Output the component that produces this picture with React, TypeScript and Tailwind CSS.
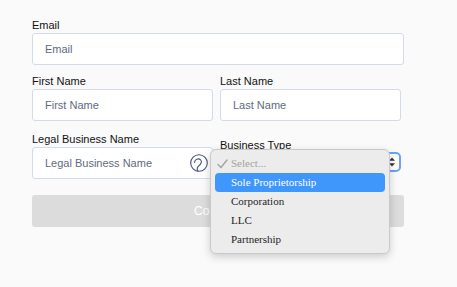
import React from "react";

const font = { fontFamily: '"Liberation Sans", Arial, sans-serif' };

function Field({ label, placeholder, icon }: { label: string; placeholder: string; icon?: boolean }) {
    return (
        <div className="flex flex-col w-[181px]">
            <label className="text-[11px] leading-4 text-[#111]">{label}</label>
            <div className="relative h-[32px] w-full rounded-[3px] border border-[#d3dbe8] bg-white flex items-center pl-[12px]">
                <span className="text-[11px] text-[#5e6a84]">{placeholder}</span>
                {icon && (
                    <svg className="absolute left-[156px] top-[5px]" width="20" height="20" viewBox="0 0 20 20" fill="none">
                        <circle cx="10" cy="10" r="8.3" stroke="#46527a" strokeWidth="1.1" />
                        <path d="M5.6 9.4 C5.4 6.2 9.6 5 11.6 6.8 C13.4 8.6 12 11 9.8 12.8 C8.2 14.2 7.8 16.2 8.8 18.2" stroke="#46527a" strokeWidth="1.1" strokeLinecap="round" />
                    </svg>
                )}
            </div>
        </div>
    );
}

export default function App() {
    return (
        <div className="w-[457px] h-[287px] bg-[#fafafa] overflow-hidden" style={font}>
            <div className="pl-[32px] pt-[17px] flex flex-col">
                <label className="text-[11px] leading-4 text-[#111]">Email</label>
                <div className="h-[32px] w-[372px] rounded-[3px] border border-[#d3dbe8] bg-white flex items-center pl-[12px]">
                    <span className="text-[11px] text-[#5e6a84]">Email</span>
                </div>

                <div className="mt-2 flex gap-[7px]">
                    <Field label="First Name" placeholder="First Name" />
                    <Field label="Last Name" placeholder="Last Name" />
                </div>

                <div className="mt-[10px] flex gap-[7px]">
                    <Field label="Legal Business Name" placeholder="Legal Business Name" icon />
                    <div className="flex flex-col w-[181px]">
                        <label className="mt-[7px] text-[11px] leading-[14px] text-[#111]">Business Type</label>
                        <div className="relative">
                            <div className="h-[20px] w-[181px] rounded-[5px] border-2 border-[#6aa2f4] bg-white flex items-center justify-end pr-[3px]">
                                <svg width="8" height="12" viewBox="0 0 8 12">
                                    <path d="M4 1.5 L7 4.8 H1 Z" fill="#333" />
                                    <path d="M4 10.5 L7 7.2 H1 Z" fill="#333" />
                                </svg>
                            </div>

                            {/* open popup menu */}
                            <div
                                className="absolute left-[-10px] top-[-3px] w-[180px] rounded-[6px] border border-[#c9c9c9] bg-[#ececec] shadow-[0_3px_8px_rgba(0,0,0,0.18)] py-[4px] text-[11px] text-[#1e1e1e]"
                                style={{ fontFamily: '"Liberation Serif", "Times New Roman", serif' }}
                            >
                                <div className="h-[19px] flex items-center relative pl-[20px] text-[#a3a3a3]">
                                    <svg className="absolute left-[6px] top-[5px]" width="11" height="10" viewBox="0 0 11 10" fill="none">
                                        <path d="M1 5.5 L4 8.5 L10 1" stroke="#a3a3a3" strokeWidth="1.4" strokeLinecap="round" strokeLinejoin="round" />
                                    </svg>
                                    Select...
                                </div>
                                <div className="h-[19px] mx-[4px] rounded-[4px] bg-[#3f96fb] text-white flex items-center pl-[16px]">
                                    Sole Proprietorship
                                </div>
                                <div className="h-[19px] flex items-center pl-[20px]">Corporation</div>
                                <div className="h-[19px] flex items-center pl-[20px]">LLC</div>
                                <div className="h-[19px] flex items-center pl-[20px]">Partnership</div>
                            </div>
                        </div>
                    </div>
                </div>

                <button className="mt-4 h-[32px] w-[372px] rounded-[3px] bg-[#dcdcdc] text-white text-[12px]">
                    Continue
                </button>
            </div>
        </div>
    );
}
